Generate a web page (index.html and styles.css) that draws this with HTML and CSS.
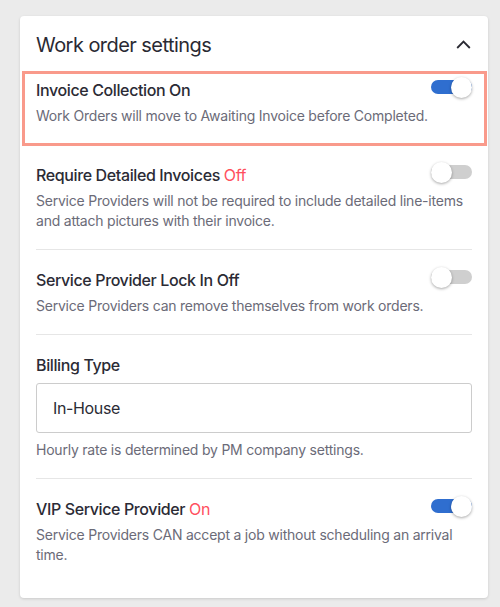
FILE: index.html
```html
<!DOCTYPE html>
<html lang="en">
<head>
<meta charset="utf-8">
<title>Work order settings</title>
<link rel="stylesheet" href="styles.css">
</head>
<body>
<div class="card">
  <div class="card-header">
    <h2 class="card-title">Work order settings</h2>
    <svg class="chevron" width="15" height="9" viewBox="0 0 15 9"><path d="M1.2 8 L7.5 1.6 L13.8 8" fill="none" stroke="#2a2a33" stroke-width="1.8"/></svg>
  </div>

  <div class="setting highlight">
    <div class="setting-head">
      <div class="setting-title">Invoice Collection On</div>
      <div class="toggle on"><span class="knob"></span></div>
    </div>
    <div class="setting-desc">Work Orders will move to Awaiting Invoice before Completed.</div>
  </div>

  <div class="setting">
    <div class="setting-head">
      <div class="setting-title">Require Detailed Invoices <span class="state">Off</span></div>
      <div class="toggle"><span class="knob"></span></div>
    </div>
    <div class="setting-desc">Service Providers will not be required to include detailed line-items and attach pictures with their invoice.</div>
  </div>

  <div class="setting">
    <div class="setting-head">
      <div class="setting-title">Service Provider Lock In Off</div>
      <div class="toggle"><span class="knob"></span></div>
    </div>
    <div class="setting-desc">Service Providers can remove themselves from work orders.</div>
  </div>

  <div class="setting">
    <div class="setting-head">
      <div class="setting-title">Billing Type</div>
    </div>
    <div class="select-box">In-House</div>
    <div class="setting-desc helper">Hourly rate is determined by PM company settings.</div>
  </div>

  <div class="setting last">
    <div class="setting-head">
      <div class="setting-title">VIP Service Provider <span class="state">On</span></div>
      <div class="toggle on"><span class="knob"></span></div>
    </div>
    <div class="setting-desc">Service Providers CAN accept a job without scheduling an arrival time.</div>
  </div>
</div>
</body>
</html>
```

FILE: styles.css
```css
* { box-sizing: border-box; }

html, body {
  margin: 0;
  padding: 0;
}

body {
  background: #ebebeb;
  font-family: "Inter", "Noto Sans", sans-serif;
  color: #2b2b35;
  padding: 16px 12px 11px 20px;
}

.card {
  background: #ffffff;
  width: 468px;
  border-radius: 4px;
  box-shadow: 0 1px 3px rgba(0, 0, 0, 0.14);
  padding-bottom: 33px;
}

.card-header {
  height: 55px;
  display: flex;
  align-items: center;
  justify-content: space-between;
  padding: 0 17px 0 16px;
}

.card-title {
  margin: 0;
  font-size: 20px;
  font-weight: 400;
  line-height: 24px;
  letter-spacing: -0.55px;
  color: #2a2a33;
  padding-top: 2px;
}

.chevron {
  display: block;
  margin-top: 1px;
}

.setting {
  margin: 0 16px;
  padding: 20px 0 18px;
  border-bottom: 1px solid #e6e6e6;
}

.setting.last {
  border-bottom: none;
  padding-bottom: 0;
}

.setting.highlight {
  margin: 0 1px 0 2px;
  border: 3px solid #f99a8b;
  padding: 6px 12px 17px 11px;
}

.setting.highlight + .setting {
  padding-top: 19px;
}

.setting-head {
  display: flex;
  justify-content: space-between;
  align-items: flex-start;
}

.setting-title {
  font-size: 16px;
  line-height: 20px;
  font-weight: 500;
  letter-spacing: -0.38px;
  color: #2b2b35;
}

.state {
  color: #ff4f5e;
  font-weight: 400;
}

.setting-desc {
  margin-top: 6px;
  font-size: 14px;
  line-height: 20px;
  letter-spacing: -0.22px;
  color: #6b6b78;
}

.setting-desc.helper {
  margin-top: 7px;
}

.toggle {
  position: relative;
  width: 41px;
  height: 20px;
  margin-top: -3px;
  flex: none;
}

.toggle::before {
  content: "";
  position: absolute;
  left: 0;
  right: 0;
  top: 3px;
  height: 14px;
  border-radius: 7px;
  background: #cfcfcf;
}

.toggle.on::before {
  background: #2f6ecf;
}

.knob {
  position: absolute;
  top: 0;
  left: 0;
  width: 21px;
  height: 21px;
  border-radius: 50%;
  background: #ffffff;
  box-shadow: 0 1px 3px rgba(0, 0, 0, 0.35);
}

.toggle.on .knob {
  left: auto;
  right: 0;
}

.select-box {
  margin-top: 8px;
  height: 50px;
  border: 1px solid #cccccc;
  border-radius: 3px;
  padding: 0 16px;
  display: flex;
  align-items: center;
  font-size: 16px;
  letter-spacing: -0.35px;
  color: #2b2b35;
}
```
